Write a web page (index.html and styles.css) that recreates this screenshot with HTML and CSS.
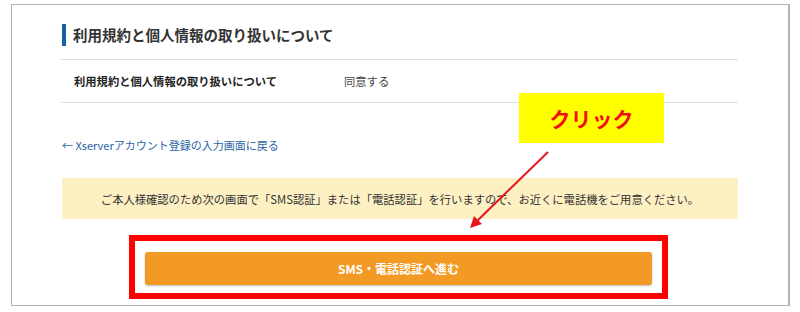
FILE: index.html
```html
<!DOCTYPE html>
<html lang="ja">
<head>
<meta charset="utf-8">
<link rel="stylesheet" href="styles.css">
</head>
<body>
<div class="page">
  <div class="frame">
    <h2 class="heading"><span class="bar"></span>利用規約と個人情報の取り扱いについて</h2>
    <div class="row">
      <div class="label">利用規約と個人情報の取り扱いについて</div>
      <div class="value">同意する</div>
    </div>
    <a class="back" href="#">← Xserverアカウント登録の入力画面に戻る</a>
    <div class="notice">ご本人様確認のため次の画面で「SMS認証」または「電話認証」を行いますので、お近くに電話機をご用意ください。</div>
    <div class="highlight">
      <button class="btn">SMS・電話認証へ進む</button>
    </div>
  </div>
  <div class="callout">クリック</div>
  <svg class="arrow" width="800" height="312" viewBox="0 0 800 312">
    <line x1="548" y1="152" x2="476" y2="222" stroke="#e8141b" stroke-width="2"/>
    <polygon points="470,228 474,216 482,224" fill="#e8141b"/>
  </svg>
</div>
</body>
</html>
```
FILE: styles.css
```css
* { box-sizing: border-box; }
html, body { margin: 0; padding: 0; background: #fff; }
body {
  font-family: "Noto Sans CJK JP", "Noto Sans", sans-serif;
  color: #333;
}
.page {
  position: relative;
  width: 800px;
  height: 312px;
  overflow: hidden;
  padding: 4px 10px 0 11px;
}
.frame {
  height: 302px;
  border: 1px solid #b4b4b4;
  border-right-width: 2px;
  padding: 19px 50px 0 49px;
}
.heading {
  display: flex;
  align-items: center;
  margin: 0 0 13px 0;
  height: 22px;
  font-size: 14.5px;
  font-weight: bold;
  color: #333;
  line-height: 22px;
}
.bar {
  width: 4px;
  height: 22px;
  background: #1c5fa8;
  margin: 0 7px 0 1px;
}
.row {
  display: flex;
  align-items: center;
  height: 44px;
  border-top: 1px solid #dedede;
  border-bottom: 1px solid #dedede;
  padding-left: 13px;
  font-size: 11.3px;
}
.label {
  width: 270px;
  font-weight: bold;
  color: #222;
}
.value { color: #444; }
.back {
  display: block;
  margin: 34px 0 0 1px;
  font-size: 11px;
  line-height: 16px;
  color: #2a64a6;
  text-decoration: none;
}
.notice {
  margin: 25px 0 0 1px;
  height: 41px;
  background: #fdf0c3;
  display: flex;
  align-items: center;
  justify-content: center;
  font-size: 11.3px;
  color: #333;
}
.highlight {
  margin: 16px 0 0 68px;
  width: 539px;
  height: 64px;
  border: 6px solid #ff0000;
  padding: 11px 10px 0 10px;
}
.btn {
  display: block;
  width: 507px;
  height: 33px;
  border: none;
  border-radius: 3px;
  background: #f39a25;
  box-shadow: 0 1px 2px rgba(0,0,0,0.25);
  color: #fff;
  font-family: "Noto Sans CJK JP", "Noto Sans", sans-serif;
  font-size: 12px;
  font-weight: bold;
}
.callout {
  position: absolute;
  left: 519px;
  top: 93px;
  width: 145px;
  height: 50px;
  background: #ffff00;
  color: #f01010;
  font-size: 21px;
  font-weight: bold;
  display: flex;
  align-items: center;
  justify-content: center;
}
.arrow {
  position: absolute;
  left: 0;
  top: 0;
  pointer-events: none;
}
```
